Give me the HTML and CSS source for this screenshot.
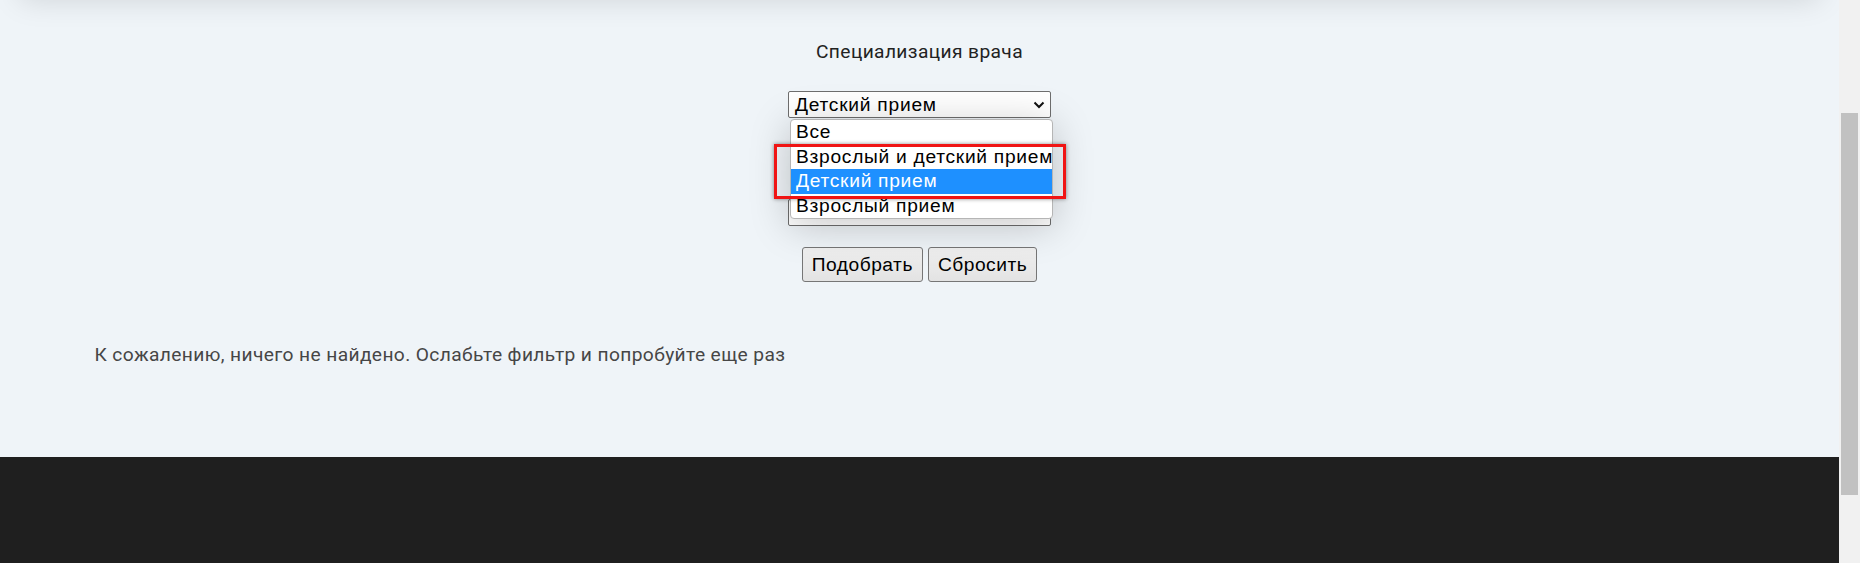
FILE: index.html
```html
<!DOCTYPE html>
<html lang="ru">

<head>
    <meta charset="UTF-8">
    <meta name="viewport" content="width=device-width, initial-scale=1.0">
    <title>Подбор врача</title>
    <link rel="stylesheet" href="styles.css">
</head>

<body>
    <div class="window">
        <div class="page">
            <header class="site-header"></header>

            <main class="content">
                <form class="filter">
                    <label class="filter-label">Специализация врача</label>

                    <div class="field">
                        <div class="select">
                            <span>Детский прием</span>
                            <svg class="chevron" width="12" height="8" viewBox="0 0 12 8">
                                <path d="M1.5 1.5 L6 6 L10.5 1.5" fill="none" stroke="#111" stroke-width="2" />
                            </svg>
                        </div>

                        <!-- open list of the select -->
                        <ul class="dropdown">
                            <li>Все</li>
                            <li>Взрослый и детский прием</li>
                            <li class="active">Детский прием</li>
                            <li>Взрослый прием</li>
                        </ul>

                        <div class="highlight-box"></div>
                    </div>

                    <div class="select select-second"></div>

                    <div class="filter-actions">
                        <button type="button">Подобрать</button>
                        <button type="button">Сбросить</button>
                    </div>
                </form>

                <div class="container">
                    <p class="empty">К сожалению, ничего не найдено. Ослабьте фильтр и попробуйте еще раз</p>
                </div>
            </main>

            <footer class="site-footer"></footer>
        </div>

        <div class="scrollbar">
            <div class="scrollbar-thumb"></div>
        </div>
    </div>
</body>

</html>
```

FILE: styles.css
```css
html,
body {
    margin: 0;
    height: 100%;
    overflow: hidden;
}

body {
    background-color: #eff4f8;
}

.window {
    display: flex;
    height: 563px;
}

.page {
    flex: 1;
    display: flex;
    flex-direction: column;
    overflow: hidden;
    background-color: #eff4f8;
}

.site-header {
    flex: none;
    width: 1800px;
    height: 80px;
    margin: -80px auto 0;
    background-color: #fff;
    box-shadow: 0 0 30px rgba(0, 0, 0, 0.13);
}

.content {
    flex: none;
    height: 457px;
}

.filter {
    display: flex;
    flex-direction: column;
    align-items: center;
    padding-top: 40px;
}

.filter-label {
    font: 19.2px/23px Roboto, sans-serif;
    letter-spacing: 0.38px;
    color: #222;
}

.field {
    position: relative;
    margin-top: 28px;
}

.select {
    box-sizing: border-box;
    width: 263px;
    height: 27px;
    padding: 1px 5px 0 6px;
    display: flex;
    align-items: center;
    justify-content: space-between;
    border: 1px solid #6e6e6e;
    border-radius: 2px;
    background-color: #fff;
    font: 19.2px "Liberation Sans", Arial, sans-serif;
    letter-spacing: 0.75px;
    color: #000;
}

.select-second {
    margin-top: 81px;
}

.dropdown {
    position: absolute;
    top: 28px;
    left: 2px;
    z-index: 2;
    box-sizing: border-box;
    width: 263px;
    height: 100px;
    margin: 0;
    padding: 0;
    list-style: none;
    background-color: #fff;
    border: 1px solid #b5b5b5;
    border-radius: 4px;
    box-shadow: 0 6px 40px rgba(0, 0, 0, 0.22);
    font: 19.2px "Liberation Sans", Arial, sans-serif;
    letter-spacing: 0.72px;
    color: #000;
}

.dropdown li {
    height: 24.5px;
    line-height: 24.5px;
    padding-left: 5px;
    white-space: nowrap;
}

.dropdown li.active {
    background-color: #1e90ff;
    color: #fff;
}

.highlight-box {
    position: absolute;
    left: -14px;
    top: 53px;
    z-index: 3;
    box-sizing: border-box;
    width: 292px;
    height: 55px;
    border: 3px solid #f01414;
    box-shadow: 0 0 4px rgba(0, 0, 0, 0.45);
}

.filter-actions {
    display: flex;
    gap: 5px;
    margin-top: 21px;
}

.filter-actions button {
    height: 35px;
    padding: 0 9px;
    border: 1px solid #767676;
    border-radius: 3px;
    background: linear-gradient(#f0f0f0, #e3e3e3);
    font: 19.2px "Liberation Sans", Arial, sans-serif;
    letter-spacing: 0.5px;
    color: #000;
}

.container {
    box-sizing: border-box;
    width: 1680px;
    margin: 61px auto 0;
    padding: 0 15px;
}

.empty {
    margin: 0;
    font: 19.2px/23px Roboto, sans-serif;
    letter-spacing: 0.38px;
    color: #464646;
}

.site-footer {
    flex: 1;
    background-color: #1f1f1f;
}

.scrollbar {
    flex: none;
    width: 21px;
    background-color: #f1f1f1;
}

.scrollbar-thumb {
    height: 382px;
    margin: 113px 2px 0;
    background-color: #c1c1c1;
}
```
